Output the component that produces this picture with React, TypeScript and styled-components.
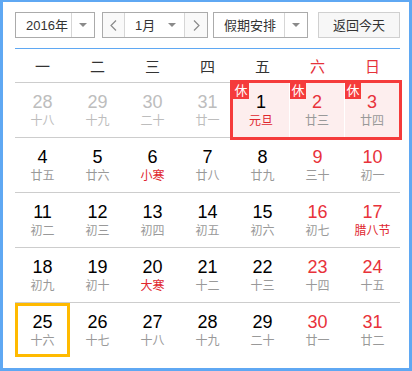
import React from 'react';
import styled, { createGlobalStyle, css } from 'styled-components';

const GlobalStyle = createGlobalStyle`
  html, body {
    margin: 0;
    padding: 0;
    background: #fff;
  }
  body {
    font-family: "Liberation Sans", "Noto Sans CJK SC", sans-serif;
  }
  * {
    box-sizing: border-box;
  }
`;

type Tone = 'muted' | 'normal' | 'red';

interface Day {
  d: number;
  lunar: string;
  tone?: Tone;
  fest?: boolean;
  today?: boolean;
}

const Frame = styled.div`
  width: 412px;
  height: 371px;
  border: 3px solid #5fa8f3;
  border-top-width: 2px;
  padding: 10px 9px 11px 12px;
  background: #fff;
`;

const Toolbar = styled.div`
  display: flex;
  align-items: stretch;
  height: 26px;
  font-size: 13px;
  color: #333;
`;

const SelectBox = styled.div<{ $gap?: number }>`
  display: flex;
  border: 1px solid #ababab;
  background: #fff;
  margin-right: ${(p) => p.$gap ?? 0}px;
`;

const SelectLabel = styled.div<{ $w: number }>`
  width: ${(p) => p.$w}px;
  padding-left: 10px;
  display: flex;
  align-items: center;
  line-height: 1;
`;

const CaretCell = styled.div<{ $w: number; $split?: boolean }>`
  width: ${(p) => p.$w}px;
  display: flex;
  align-items: center;
  justify-content: center;
  ${(p) =>
    p.$split &&
    css`
      border-left: 1px solid #d6d6d6;
    `}
`;

const Caret = styled.span`
  width: 0;
  height: 0;
  border-left: 4px solid transparent;
  border-right: 4px solid transparent;
  border-top: 4px solid #8a8a8a;
`;

const NavButton = styled.div<{ $side: 'left' | 'right' }>`
  width: ${(p) => (p.$side === 'left' ? 22 : 23)}px;
  background: #f9f9f9;
  display: flex;
  align-items: center;
  justify-content: center;
  ${(p) =>
    p.$side === 'left'
      ? css`
          border-right: 1px solid #d6d6d6;
        `
      : css`
          border-left: 1px solid #d6d6d6;
        `}
`;

const MonthLabel = styled.div`
  width: 59px;
  display: flex;
  align-items: center;
  padding: 0 8px 0 10px;
  justify-content: space-between;
  line-height: 1;
`;

const TodayButton = styled.div`
  margin-left: auto;
  width: 82px;
  border: 1px solid #d0d0d0;
  background: #f7f7f7;
  display: flex;
  align-items: center;
  justify-content: center;
  line-height: 1;
`;

const BlueRule = styled.div`
  height: 1px;
  background: #5fa8f3;
  margin-top: 10px;
`;

const WeekHeader = styled.div`
  display: grid;
  grid-template-columns: repeat(7, 55px);
  height: 34px;
  border-bottom: 1px solid #cdcdcd;
  align-items: center;
  text-align: center;
  font-size: 15px;
`;

const Weekday = styled.div<{ $weekend?: boolean }>`
  color: ${(p) => (p.$weekend ? '#e5323a' : '#333')};
  padding-bottom: 1px;
`;

const WeekRow = styled.div<{ $last?: boolean }>`
  display: grid;
  grid-template-columns: repeat(7, 55px);
  height: ${(p) => (p.$last ? 54 : 55)}px;
  border-bottom: ${(p) => (p.$last ? 'none' : '1px solid #cdcdcd')};
`;

const DayCell = styled.div<{ $today?: boolean }>`
  display: flex;
  flex-direction: column;
  align-items: center;
  justify-content: center;
  ${(p) =>
    p.$today &&
    css`
      box-shadow: inset 0 0 0 3px #ffba00;
    `}
`;

const toneColor: Record<Tone, string> = {
  muted: '#bdbdbd',
  normal: '#000',
  red: '#e8323a',
};

const DayNum = styled.div<{ $tone: Tone }>`
  font-size: 18px;
  line-height: 20px;
  color: ${(p) => toneColor[p.$tone]};
`;

const Lunar = styled.div<{ $fest?: boolean; $muted?: boolean }>`
  font-size: 12px;
  line-height: 14px;
  margin-top: 2px;
  color: ${(p) => (p.$fest ? '#e0262e' : p.$muted ? '#bdbdbd' : '#999')};
`;

const HolidayGroup = styled.div`
  grid-column: 5 / 8;
  margin: -3px -2px -3px -5px;
  border: 3px solid #f53b3b;
  background: #fff;
  display: grid;
  grid-template-columns: 56px 54px 54px;
  column-gap: 1px;
`;

const HolidayCell = styled(DayCell)`
  position: relative;
  background: #fdeeee;
`;

const RestBadge = styled.span`
  position: absolute;
  top: 0;
  left: 0;
  width: 16px;
  height: 16px;
  background: #f53b3b;
  color: #fff;
  font-size: 13px;
  line-height: 16px;
  text-align: center;
`;

const Chevron: React.FC<{ dir: 'left' | 'right' }> = ({ dir }) => (
  <svg width="7" height="11" viewBox="0 0 7 11">
    <path
      d={dir === 'left' ? 'M6 0.5 L1 5.5 L6 10.5' : 'M1 0.5 L6 5.5 L1 10.5'}
      fill="none"
      stroke="#8a8a8a"
      strokeWidth="1.2"
    />
  </svg>
);

const weekdays = ['一', '二', '三', '四', '五', '六', '日'];

const firstRow: Day[] = [
  { d: 28, lunar: '十八', tone: 'muted' },
  { d: 29, lunar: '十九', tone: 'muted' },
  { d: 30, lunar: '二十', tone: 'muted' },
  { d: 31, lunar: '廿一', tone: 'muted' },
];

const holidays: Day[] = [
  { d: 1, lunar: '元旦', fest: true },
  { d: 2, lunar: '廿三', tone: 'red' },
  { d: 3, lunar: '廿四', tone: 'red' },
];

const weeks: Day[][] = [
  [
    { d: 4, lunar: '廿五' },
    { d: 5, lunar: '廿六' },
    { d: 6, lunar: '小寒', fest: true },
    { d: 7, lunar: '廿八' },
    { d: 8, lunar: '廿九' },
    { d: 9, lunar: '三十', tone: 'red' },
    { d: 10, lunar: '初一', tone: 'red' },
  ],
  [
    { d: 11, lunar: '初二' },
    { d: 12, lunar: '初三' },
    { d: 13, lunar: '初四' },
    { d: 14, lunar: '初五' },
    { d: 15, lunar: '初六' },
    { d: 16, lunar: '初七', tone: 'red' },
    { d: 17, lunar: '腊八节', tone: 'red', fest: true },
  ],
  [
    { d: 18, lunar: '初九' },
    { d: 19, lunar: '初十' },
    { d: 20, lunar: '大寒', fest: true },
    { d: 21, lunar: '十二' },
    { d: 22, lunar: '十三' },
    { d: 23, lunar: '十四', tone: 'red' },
    { d: 24, lunar: '十五', tone: 'red' },
  ],
  [
    { d: 25, lunar: '十六', today: true },
    { d: 26, lunar: '十七' },
    { d: 27, lunar: '十八' },
    { d: 28, lunar: '十九' },
    { d: 29, lunar: '二十' },
    { d: 30, lunar: '廿一', tone: 'red' },
    { d: 31, lunar: '廿二', tone: 'red' },
  ],
];

const DayContent: React.FC<{ day: Day }> = ({ day }) => (
  <>
    <DayNum $tone={day.tone ?? 'normal'}>{day.d}</DayNum>
    <Lunar $fest={day.fest} $muted={day.tone === 'muted'}>
      {day.lunar}
    </Lunar>
  </>
);

const App: React.FC = () => {
  return (
    <>
      <GlobalStyle />
      <Frame>
        <Toolbar>
          <SelectBox $gap={7}>
            <SelectLabel $w={55}>2016年</SelectLabel>
            <CaretCell $w={23} $split>
              <Caret />
            </CaretCell>
          </SelectBox>
          <SelectBox $gap={5}>
            <NavButton $side="left">
              <Chevron dir="left" />
            </NavButton>
            <MonthLabel>
              1月
              <Caret />
            </MonthLabel>
            <NavButton $side="right">
              <Chevron dir="right" />
            </NavButton>
          </SelectBox>
          <SelectBox>
            <SelectLabel $w={70}>假期安排</SelectLabel>
            <CaretCell $w={23} $split>
              <Caret />
            </CaretCell>
          </SelectBox>
          <TodayButton>返回今天</TodayButton>
        </Toolbar>
        <BlueRule />
        <WeekHeader>
          {weekdays.map((w, i) => (
            <Weekday key={w} $weekend={i > 4}>
              {w}
            </Weekday>
          ))}
        </WeekHeader>
        <WeekRow>
          {firstRow.map((day) => (
            <DayCell key={`p${day.d}`}>
              <DayContent day={day} />
            </DayCell>
          ))}
          <HolidayGroup>
            {holidays.map((day) => (
              <HolidayCell key={day.d}>
                <RestBadge>休</RestBadge>
                <DayContent day={day} />
              </HolidayCell>
            ))}
          </HolidayGroup>
        </WeekRow>
        {weeks.map((week, wi) => (
          <WeekRow key={wi} $last={wi === weeks.length - 1}>
            {week.map((day) => (
              <DayCell key={day.d} $today={day.today}>
                <DayContent day={day} />
              </DayCell>
            ))}
          </WeekRow>
        ))}
      </Frame>
    </>
  );
};

export default App;
